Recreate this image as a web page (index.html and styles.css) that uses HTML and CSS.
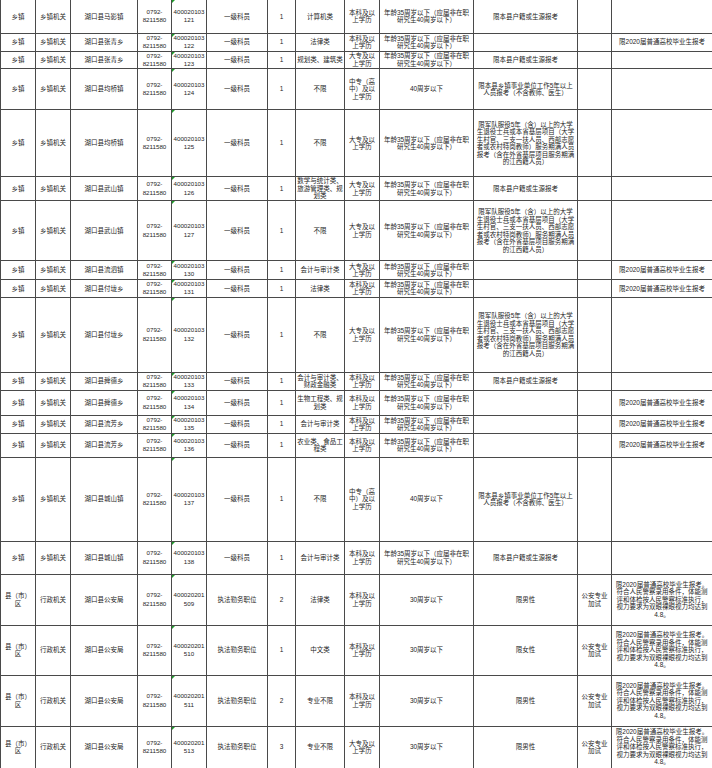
FILE: index.html
```html
<!DOCTYPE html>
<html lang="zh">
<head>
<meta charset="utf-8">
<title>岗位表</title>
<link rel="stylesheet" href="styles.css">
</head>
<body>
<table class="grid">
<colgroup>
<col class="c1"><col class="c2"><col class="c3"><col class="c4"><col class="c5"><col class="c6"><col class="c7"><col class="c8"><col class="c9"><col class="c10"><col class="c11"><col class="c12"><col class="c13">
</colgroup>
<tbody>
<tr class="h33"><td>乡镇</td><td>乡镇机关</td><td>湖口县马影镇</td><td class="num">0792-<br>8211580</td><td class="num code">400020103<br>121</td><td>一级科员</td><td>1</td><td>计算机类</td><td>本科及以<br>上学历</td><td>年龄35周岁以下（应届非在职<br>研究生40周岁以下）</td><td>限本县户籍或生源报考</td><td></td><td></td></tr>
<tr class="h18"><td>乡镇</td><td>乡镇机关</td><td>湖口县张青乡</td><td class="num">0792-<br>8211580</td><td class="num code">400020103<br>122</td><td>一级科员</td><td>1</td><td>法律类</td><td>本科及以<br>上学历</td><td>年龄35周岁以下（应届非在职<br>研究生40周岁以下）</td><td></td><td></td><td>限2020届普通高校毕业生报考</td></tr>
<tr class="h17"><td>乡镇</td><td>乡镇机关</td><td>湖口县张青乡</td><td class="num">0792-<br>8211580</td><td class="num code">400020103<br>123</td><td>一级科员</td><td>1</td><td>规划类、建筑类</td><td>大专及以<br>上学历</td><td>年龄35周岁以下（应届非在职<br>研究生40周岁以下）</td><td>限本县户籍或生源报考</td><td></td><td></td></tr>
<tr class="h41"><td>乡镇</td><td>乡镇机关</td><td>湖口县均桥镇</td><td class="num">0792-<br>8211580</td><td class="num code">400020103<br>124</td><td>一级科员</td><td>1</td><td>不限</td><td>中专（高<br>中）及以<br>上学历</td><td>40周岁以下</td><td>限本县乡镇事业单位工作5年以上<br>人员报考（不含教师、医生）</td><td></td><td></td></tr>
<tr class="h67"><td>乡镇</td><td>乡镇机关</td><td>湖口县均桥镇</td><td class="num">0792-<br>8211580</td><td class="num code">400020103<br>125</td><td>一级科员</td><td>1</td><td>不限</td><td>大专及以<br>上学历</td><td>年龄35周岁以下（应届非在职<br>研究生40周岁以下）</td><td>限军队服役5年（含）以上的大学<br>生退役士兵或本省基层项目（大学<br>生村官、三支一扶人员、西部志愿<br>者或农村特岗教师）服务期满人员<br>报考（含在外省基层项目服务期满<br>的江西籍人员）</td><td></td><td></td></tr>
<tr class="h24"><td>乡镇</td><td>乡镇机关</td><td>湖口县武山镇</td><td class="num">0792-<br>8211580</td><td class="num code">400020103<br>126</td><td>一级科员</td><td>1</td><td>数学与统计类、<br>旅游管理类、规<br>划类</td><td>大专及以<br>上学历</td><td>年龄35周岁以下（应届非在职<br>研究生40周岁以下）</td><td>限本县户籍或生源报考</td><td></td><td></td></tr>
<tr class="h60"><td>乡镇</td><td>乡镇机关</td><td>湖口县武山镇</td><td class="num">0792-<br>8211580</td><td class="num code">400020103<br>127</td><td>一级科员</td><td>1</td><td>不限</td><td>大专及以<br>上学历</td><td>年龄35周岁以下（应届非在职<br>研究生40周岁以下）</td><td>限军队服役5年（含）以上的大学<br>生退役士兵或本省基层项目（大学<br>生村官、三支一扶人员、西部志愿<br>者或农村特岗教师）服务期满人员<br>报考（含在外省基层项目服务期满<br>的江西籍人员）</td><td></td><td></td></tr>
<tr class="h19"><td>乡镇</td><td>乡镇机关</td><td>湖口县流泗镇</td><td class="num">0792-<br>8211580</td><td class="num code">400020103<br>130</td><td>一级科员</td><td>1</td><td>会计与审计类</td><td>大专及以<br>上学历</td><td>年龄35周岁以下（应届非在职<br>研究生40周岁以下）</td><td></td><td></td><td>限2020届普通高校毕业生报考</td></tr>
<tr class="h17"><td>乡镇</td><td>乡镇机关</td><td>湖口县付垅乡</td><td class="num">0792-<br>8211580</td><td class="num code">400020103<br>131</td><td>一级科员</td><td>1</td><td>法律类</td><td>本科及以<br>上学历</td><td>年龄35周岁以下（应届非在职<br>研究生40周岁以下）</td><td></td><td></td><td>限2020届普通高校毕业生报考</td></tr>
<tr class="h75"><td>乡镇</td><td>乡镇机关</td><td>湖口县付垅乡</td><td class="num">0792-<br>8211580</td><td class="num code">400020103<br>132</td><td>一级科员</td><td>1</td><td>不限</td><td>大专及以<br>上学历</td><td>年龄35周岁以下（应届非在职<br>研究生40周岁以下）</td><td>限军队服役5年（含）以上的大学<br>生退役士兵或本省基层项目（大学<br>生村官、三支一扶人员、西部志愿<br>者或农村特岗教师）服务期满人员<br>报考（含在外省基层项目服务期满<br>的江西籍人员）</td><td></td><td></td></tr>
<tr class="h18"><td>乡镇</td><td>乡镇机关</td><td>湖口县舜德乡</td><td class="num">0792-<br>8211580</td><td class="num code">400020103<br>133</td><td>一级科员</td><td>1</td><td>会计与审计类、<br>财政金融类</td><td>本科及以<br>上学历</td><td>年龄35周岁以下（应届非在职<br>研究生40周岁以下）</td><td>限本县户籍或生源报考</td><td></td><td></td></tr>
<tr class="h25"><td>乡镇</td><td>乡镇机关</td><td>湖口县舜德乡</td><td class="num">0792-<br>8211580</td><td class="num code">400020103<br>134</td><td>一级科员</td><td>1</td><td>生物工程类、规<br>划类</td><td>本科及以<br>上学历</td><td>年龄35周岁以下（应届非在职<br>研究生40周岁以下）</td><td></td><td></td><td>限2020届普通高校毕业生报考</td></tr>
<tr class="h18"><td>乡镇</td><td>乡镇机关</td><td>湖口县流芳乡</td><td class="num">0792-<br>8211580</td><td class="num code">400020103<br>135</td><td>一级科员</td><td>1</td><td>会计与审计类</td><td>本科及以<br>上学历</td><td>年龄35周岁以下（应届非在职<br>研究生40周岁以下）</td><td></td><td></td><td>限2020届普通高校毕业生报考</td></tr>
<tr class="h24"><td>乡镇</td><td>乡镇机关</td><td>湖口县流芳乡</td><td class="num">0792-<br>8211580</td><td class="num code">400020103<br>136</td><td>一级科员</td><td>1</td><td>农业类、食品工<br>程类</td><td>本科及以<br>上学历</td><td>年龄35周岁以下（应届非在职<br>研究生40周岁以下）</td><td></td><td></td><td>限2020届普通高校毕业生报考</td></tr>
<tr class="h84"><td>乡镇</td><td>乡镇机关</td><td>湖口县城山镇</td><td class="num">0792-<br>8211580</td><td class="num code">400020103<br>137</td><td>一级科员</td><td>1</td><td>不限</td><td>中专（高<br>中）及以<br>上学历</td><td>40周岁以下</td><td>限本县乡镇事业单位工作5年以上<br>人员报考（不含教师、医生）</td><td></td><td></td></tr>
<tr class="h33"><td>乡镇</td><td>乡镇机关</td><td>湖口县城山镇</td><td class="num">0792-<br>8211580</td><td class="num code">400020103<br>138</td><td>一级科员</td><td>1</td><td>会计与审计类</td><td>本科及以<br>上学历</td><td>年龄35周岁以下（应届非在职<br>研究生40周岁以下）</td><td>限本县户籍或生源报考</td><td></td><td></td></tr>
<tr class="h51"><td>县（市）<br>区</td><td>行政机关</td><td>湖口县公安局</td><td class="num">0792-<br>8211580</td><td class="num code">400020201<br>509</td><td>执法勤务职位</td><td>2</td><td>法律类</td><td>本科及以<br>上学历</td><td>30周岁以下</td><td>限男性</td><td>公安专业<br>加试</td><td>限2020届普通高校毕业生报考。<br>符合人民警察录用条件，体能测<br>评和体检按人民警察标准执行，<br>视力要求为双眼裸眼视力均达到<br>4.8。</td></tr>
<tr class="h50"><td>县（市）<br>区</td><td>行政机关</td><td>湖口县公安局</td><td class="num">0792-<br>8211580</td><td class="num code">400020201<br>510</td><td>执法勤务职位</td><td>1</td><td>中文类</td><td>本科及以<br>上学历</td><td>30周岁以下</td><td>限女性</td><td>公安专业<br>加试</td><td>限2020届普通高校毕业生报考。<br>符合人民警察录用条件，体能测<br>评和体检按人民警察标准执行，<br>视力要求为双眼裸眼视力均达到<br>4.8。</td></tr>
<tr class="h51"><td>县（市）<br>区</td><td>行政机关</td><td>湖口县公安局</td><td class="num">0792-<br>8211580</td><td class="num code">400020201<br>511</td><td>执法勤务职位</td><td>2</td><td>专业不限</td><td>本科及以<br>上学历</td><td>30周岁以下</td><td>限男性</td><td>公安专业<br>加试</td><td>限2020届普通高校毕业生报考。<br>符合人民警察录用条件，体能测<br>评和体检按人民警察标准执行，<br>视力要求为双眼裸眼视力均达到<br>4.8。</td></tr>
<tr class="h42"><td>县（市）<br>区</td><td>行政机关</td><td>湖口县公安局</td><td class="num">0792-<br>8211580</td><td class="num code">400020201<br>513</td><td>执法勤务职位</td><td>3</td><td>专业不限</td><td>大专及以<br>上学历</td><td>30周岁以下</td><td>限男性</td><td>公安专业<br>加试</td><td>限2020届普通高校毕业生报考。<br>符合人民警察录用条件，体能测<br>评和体检按人民警察标准执行，<br>视力要求为双眼裸眼视力均达到<br>4.8。</td></tr>
</tbody>
</table>
</body>
</html>
```
FILE: styles.css
```css
html, body {
  margin: 0;
  padding: 0;
  background: #ffffff;
}
.grid {
  border-collapse: collapse;
  table-layout: fixed;
  width: 712px;
  font-family: "Liberation Sans", "Noto Sans CJK SC", sans-serif;
  font-size: 6.5px;
  line-height: 7.5px;
  color: #262626;
}
.c1 { width: 35px; }
.c2 { width: 35px; }
.c3 { width: 67px; }
.c4 { width: 34px; }
.c5 { width: 35px; }
.c6 { width: 61px; }
.c7 { width: 28px; }
.c8 { width: 49px; }
.c9 { width: 35px; }
.c10 { width: 94px; }
.c11 { width: 104px; }
.c12 { width: 34px; }
.c13 { width: 101px; }
.grid td {
  border: 1px solid #4a4a4a;
  padding: 0;
  text-align: center;
  vertical-align: middle;
  white-space: nowrap;
  overflow: visible;
}
.grid tr:first-child td {
  border-top: none;
}
.grid td.num {
  font-size: 6.2px;
  line-height: 8.3px;
}
.grid td.code {
  position: relative;
}
.grid td.code::before {
  content: "";
  position: absolute;
  left: 0;
  top: 0;
  width: 0;
  height: 0;
  border-top: 3px solid #1e9a2a;
  border-right: 3px solid transparent;
}
.h17 { height: 17px; }
.h18 { height: 18px; }
.h19 { height: 19px; }
.h24 { height: 24px; }
.h25 { height: 25px; }
.h33 { height: 33px; }
.h41 { height: 41px; }
.h42 { height: 42px; }
.h50 { height: 50px; }
.h51 { height: 51px; }
.h60 { height: 60px; }
.h67 { height: 67px; }
.h75 { height: 75px; }
.h84 { height: 84px; }
```
